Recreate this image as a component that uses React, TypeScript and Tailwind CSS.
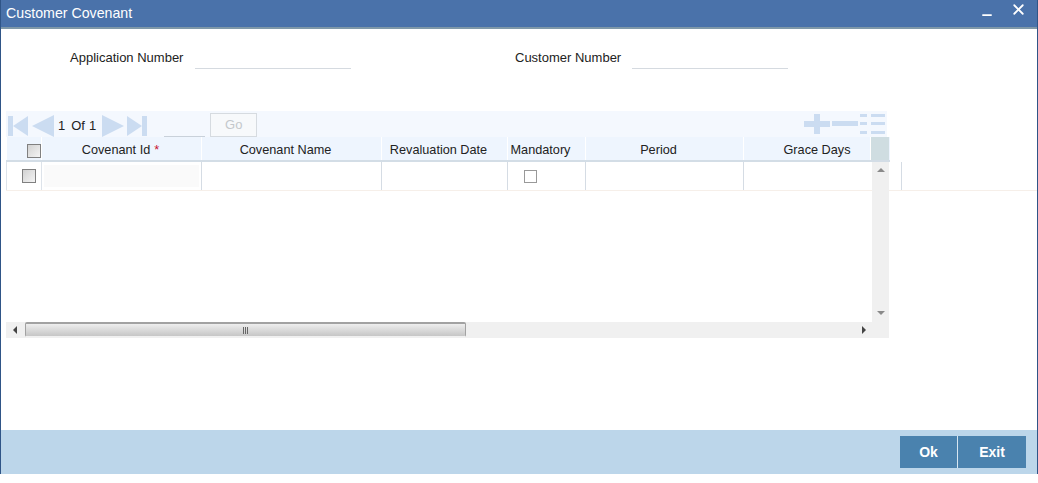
import { Minus, X } from 'lucide-react'

const columns = [
  { title: 'Covenant Name', width: 'w-[180px] pr-[12px]' },
  { title: 'Revaluation Date', width: 'w-[126px] pr-[12px]' },
  { title: 'Mandatory', width: 'w-[78px] pr-[12px]' },
  { title: 'Period', width: 'w-[158px] pr-[12px]' },
  { title: 'Grace Days', width: 'w-[127px] pl-[20px]' },
]

function FirstIcon() {
  return (
    <svg width="20" height="22" viewBox="0 0 20 22" fill="#cbdcf1">
      <rect x="0" y="1" width="5" height="20" />
      <path d="M5 11 20 1v20z" />
    </svg>
  )
}

function PrevIcon() {
  return (
    <svg width="22" height="22" viewBox="0 0 22 22" fill="#cbdcf1">
      <path d="M0 11 22 0v22z" />
    </svg>
  )
}

function NextIcon() {
  return (
    <svg width="22" height="22" viewBox="0 0 22 22" fill="#cbdcf1">
      <path d="M22 11 0 0v22z" />
    </svg>
  )
}

function LastIcon() {
  return (
    <svg width="20" height="22" viewBox="0 0 20 22" fill="#cbdcf1">
      <rect x="15" y="1" width="5" height="20" />
      <path d="M15 11 0 1v20z" />
    </svg>
  )
}

function ListIcon() {
  return (
    <svg width="25" height="20" viewBox="0 0 25 20" fill="#cbdcf1">
      <rect x="0" y="0" width="7" height="3" />
      <rect x="11" y="0" width="14" height="3" />
      <rect x="0" y="8" width="7" height="3" />
      <rect x="11" y="8" width="14" height="3" />
      <rect x="0" y="17" width="7" height="3" />
      <rect x="11" y="17" width="14" height="3" />
    </svg>
  )
}

function Field({ label, labelWidth }: { label: string; labelWidth: string }) {
  return (
    <div className="flex items-start">
      <span className={`${labelWidth} pt-[1px] text-[13px] leading-[16px] text-[#222]`}>{label}</span>
      <div className="h-[20px] w-[156px] border-b border-[#d5dae0]" />
    </div>
  )
}

function Checkbox() {
  return <div className="h-[14px] w-[14px] border border-[#808080] bg-gradient-to-br from-[#d2d2d2] to-[#f4f4f4]" />
}

export default function App() {
  return (
    <div className="h-[483px] w-[1038px] bg-white font-['Liberation_Sans',Arial,sans-serif]">
      <div className="flex h-[474px] flex-col overflow-hidden border-x border-[#2f5587]">
        <header className="flex h-[29px] shrink-0 items-center justify-between border-b-2 border-[#7f98a8] bg-[#4a72aa] pb-[2px] pl-[5px] pr-[10px] text-white">
          <span className="text-[14.2px] leading-[16px]">Customer Covenant</span>
          <div className="flex items-center gap-[16px]">
            <Minus size={14} strokeWidth={3} className="mt-[4px]" />
            <X size={17} strokeWidth={2.5} className="-mt-[7px]" />
          </div>
        </header>

        <main className="flex-1 bg-white">
          <div className="flex gap-[164px] pl-[69px] pt-[20px]">
            <Field label="Application Number" labelWidth="w-[125px]" />
            <Field label="Customer Number" labelWidth="w-[117px]" />
          </div>

          <section className="ml-[5px] mt-[42px] w-[884px]">
            <div className="flex h-[26px] w-[881px] items-end bg-[#f4f8fe] pl-[2px]">
              <FirstIcon />
              <div className="ml-[4px]"><PrevIcon /></div>
              <span className="mb-[2px] ml-[4px] text-[13px] text-[#222]">1</span>
              <span className="mb-[2px] ml-[6px] text-[13px] text-[#222]">Of</span>
              <span className="mb-[2px] ml-[4px] text-[13px] text-[#222]">1</span>
              <div className="ml-[6px]"><NextIcon /></div>
              <div className="ml-[3px]"><LastIcon /></div>
              <div className="ml-[17px] h-[24px] w-[41px] border-b border-[#c9d1da]" />
              <button className="ml-[5px] h-[24px] w-[47px] border border-[#d6dbe0] bg-[#f7f9fb] text-[13px] text-[#c4c8cc]">Go</button>
              <div className="mb-[3px] ml-auto flex items-center gap-[2px] pr-[2px]">
                <svg width="26" height="20" viewBox="0 0 26 20" fill="#cbdcf1">
                  <rect x="0" y="7" width="26" height="6" />
                  <rect x="10" y="0" width="6" height="20" />
                </svg>
                <svg width="26" height="20" viewBox="0 0 26 20" fill="#cbdcf1">
                  <rect x="0" y="7" width="26" height="5" />
                </svg>
                <ListIcon />
              </div>
            </div>

            <div className="flex h-[25px] border-b-2 border-[#d3dde6] bg-[#eef5fe] text-[12.7px] text-[#222]">
              <div className="flex w-[36px] items-center justify-end border-x border-white pt-[5px]">
                <Checkbox />
              </div>
              <div className="flex w-[160px] items-center justify-center border-r border-white pr-[2px] pt-[4px]">
                Covenant Id<span className="ml-[4px] text-[#c8102e]">*</span>
              </div>
              {columns.map((column) => (
                <div key={column.title} className={`flex ${column.width} items-center justify-center border-r border-white pt-[4px]`}>
                  {column.title}
                </div>
              ))}
              <div className="w-[18px] bg-[#cfdde1]" />
            </div>

            <div className="relative h-[160px] w-[883px]">
              <div className="flex h-[29px] w-[1031px] border-b border-[#f6efe9]">
                <div className="flex w-[36px] items-center justify-end border-x border-[#dde3ea] pr-[5px]">
                  <Checkbox />
                </div>
                <div className="flex w-[160px] items-center border-r border-[#d5dce4] px-[2px]">
                  <div className="h-[22px] w-[155px] bg-[#fafafa]" />
                </div>
                <div className="w-[180px] border-r border-[#d5dce4]" />
                <div className="w-[126px] border-r border-[#d5dce4]" />
                <div className="flex w-[78px] items-center justify-center border-r border-[#d5dce4] pr-[32px]">
                  <div className="h-[13px] w-[13px] border border-[#999] bg-white" />
                </div>
                <div className="w-[158px] border-r border-[#d5dce4]" />
                <div className="w-[158px] border-r border-[#d5dce4]" />
              </div>

              {/* vertical scrollbar sits over the row */}
              <div className="absolute bottom-0 right-0 top-0 flex w-[17px] flex-col items-center justify-between bg-[#f0f0f0] py-[6px]">
                <div className="h-0 w-0 border-x-[4px] border-b-[4px] border-x-transparent border-b-[#8a8a8a]" />
                <div className="mb-[1px] h-0 w-0 border-x-[4px] border-t-[4px] border-x-transparent border-t-[#8a8a8a]" />
              </div>
            </div>

            <div className="flex h-[16px] w-[883px] items-start bg-[#f0f0f0]">
              <div className="flex h-[15px] w-[19px] items-center justify-center pr-[2px]">
                <div className="h-0 w-0 border-y-[4px] border-r-[4px] border-y-transparent border-r-[#444]" />
              </div>
              <div className="flex h-[15px] w-[441px] items-center justify-center rounded-[2px] border border-t-2 border-[#a2a2a2] border-b-[#f0f0f0] bg-gradient-to-b from-[#eeeeee] to-[#c6c6c6]">
                <div className="ml-[-1px] flex gap-[1px]">
                  <div className="h-[7px] w-[1px] bg-[#666]" />
                  <div className="h-[7px] w-[1px] bg-[#666]" />
                  <div className="h-[7px] w-[1px] bg-[#666]" />
                </div>
              </div>
              <div className="ml-auto mr-[23px] mt-[4px] h-0 w-0 border-y-[4px] border-l-[4px] border-y-transparent border-l-[#444]" />
            </div>
          </section>
        </main>

        <footer className="flex h-[44px] shrink-0 items-center justify-end bg-[#bcd6ea] pr-[11px]">
          <button className="h-[32px] w-[58px] border-r border-[#d7e6f1] bg-[#4a82ae] text-[14px] font-bold text-white">Ok</button>
          <button className="h-[32px] w-[68px] bg-[#4a82ae] text-[14px] font-bold text-white">Exit</button>
        </footer>
      </div>
    </div>
  )
}
